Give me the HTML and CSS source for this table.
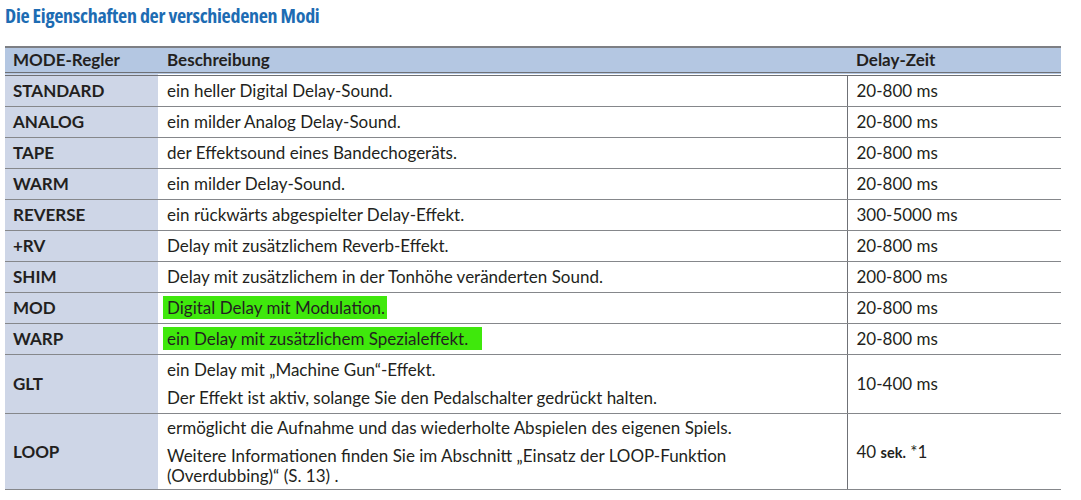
FILE: index.html
```html
<!DOCTYPE html>
<html lang="de">
<head>
<meta charset="utf-8">
<title>Die Eigenschaften der verschiedenen Modi</title>
<link rel="stylesheet" href="styles.css">
</head>
<body>
<div class="page">
  <h1 class="title">Die Eigenschaften der verschiedenen Modi</h1>
  <table class="modes">
    <colgroup>
      <col class="c-mode">
      <col class="c-desc">
      <col class="c-time">
    </colgroup>
    <thead>
      <tr><th>MODE-Regler</th><th>Beschreibung</th><th>Delay-Zeit</th></tr>
    </thead>
    <tbody>
      <tr><td class="mode">STANDARD</td><td class="desc">ein heller Digital Delay-Sound.</td><td class="time">20-800 ms</td></tr>
      <tr><td class="mode">ANALOG</td><td class="desc">ein milder Analog Delay-Sound.</td><td class="time">20-800 ms</td></tr>
      <tr><td class="mode">TAPE</td><td class="desc">der Effektsound eines Bandechogeräts.</td><td class="time">20-800 ms</td></tr>
      <tr><td class="mode">WARM</td><td class="desc">ein milder Delay-Sound.</td><td class="time">20-800 ms</td></tr>
      <tr><td class="mode">REVERSE</td><td class="desc">ein rückwärts abgespielter Delay-Effekt.</td><td class="time">300-5000 ms</td></tr>
      <tr><td class="mode">+RV</td><td class="desc">Delay mit zusätzlichem Reverb-Effekt.</td><td class="time">20-800 ms</td></tr>
      <tr><td class="mode">SHIM</td><td class="desc">Delay mit zusätzlichem in der Tonhöhe veränderten Sound.</td><td class="time">200-800 ms</td></tr>
      <tr><td class="mode">MOD</td><td class="desc"><span class="hl">Digital Delay mit Modulation.</span></td><td class="time">20-800 ms</td></tr>
      <tr><td class="mode">WARP</td><td class="desc"><span class="hl hl-wide">ein Delay mit zusätzlichem Spezialeffekt.</span></td><td class="time">20-800 ms</td></tr>
      <tr class="multi glt"><td class="mode">GLT</td><td class="desc"><p>ein Delay mit „Machine Gun“-Effekt.</p><p>Der Effekt ist aktiv, solange Sie den Pedalschalter gedrückt halten.</p></td><td class="time">10-400 ms</td></tr>
      <tr class="multi loop"><td class="mode">LOOP</td><td class="desc"><p>ermöglicht die Aufnahme und das wiederholte Abspielen des eigenen Spiels.</p><p>Weitere Informationen finden Sie im Abschnitt „Einsatz der LOOP-Funktion<br>(Overdubbing)“ (S. 13) .</p></td><td class="time">40 <span class="unit">sek.</span> *1</td></tr>
    </tbody>
  </table>
</div>
</body>
</html>
```

FILE: styles.css
```css
html, body {
  margin: 0;
  padding: 0;
  background: #ffffff;
}

.page {
  padding: 5px 20px 0 5px;
  font-family: "Lato", "Open Sans", sans-serif;
  color: #231f20;
}

.title {
  margin: 0 0 19px 0;
  font-family: "Open Sans", sans-serif;
  font-stretch: 75%;
  font-weight: 700;
  font-size: 20px;
  line-height: 22px;
  letter-spacing: -0.3px;
  color: #1d6cb3;
}

.modes {
  width: 1056px;
  border-collapse: collapse;
  table-layout: fixed;
  font-size: 17px;
}

.c-mode { width: 153px; }
.c-desc { width: 689px; }
.c-time { width: 214px; }

.modes th {
  background: #b4c7e2;
  text-align: left;
  font-weight: 700;
  height: 24px;
  padding: 0 9px;
  line-height: 20px;
  border-top: 2px solid #7d7f84;
  border-bottom: 4px double #6e7075;
}

.modes th:first-child { padding-left: 8px; }

.modes td {
  height: 20px;
  padding: 5px 9px;
  line-height: 20px;
  border-bottom: 1.5px solid #85878b;
  vertical-align: middle;
}

.modes td.mode {
  background: #ced6e7;
  font-weight: 700;
  padding-left: 8px;
}

.modes td.time {
  border-left: 1.5px solid #6f7176;
}

.desc p {
  margin: 0;
}

.desc p + p {
  margin-top: 8px;
}

.glt td {
  padding-top: 5px;
  padding-bottom: 5px;
}

.loop td {
  padding-top: 4px;
  padding-bottom: 3px;
}

.loop .desc p + p {
  margin-top: 8px;
}

.hl {
  background: #3fe80c;
  padding: 1px 2px 1px 4px;
  margin-left: -4px;
}

.hl-wide {
  padding-right: 14px;
}

.unit {
  font-size: 14.5px;
  font-weight: 700;
}
```
